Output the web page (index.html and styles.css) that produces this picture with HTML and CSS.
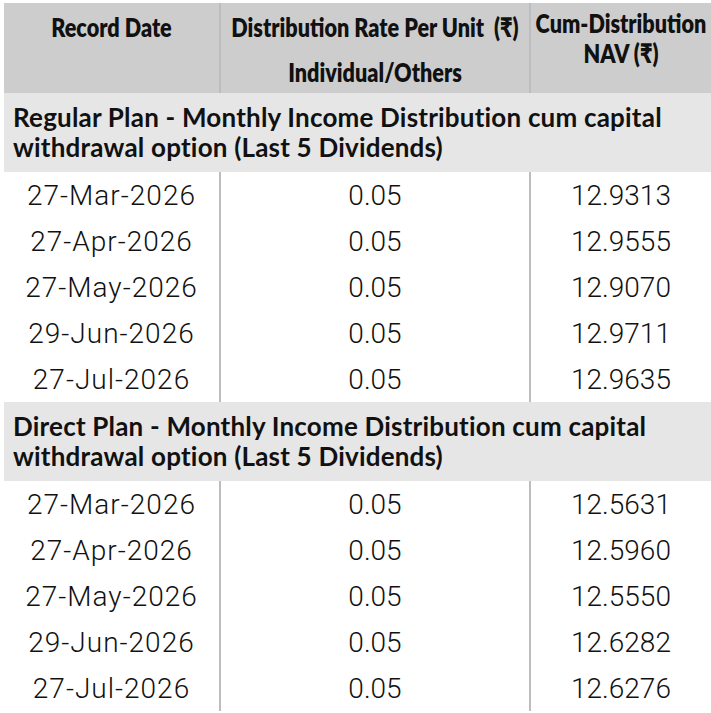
FILE: index.html
```html
<!DOCTYPE html>
<html>
<head>
<meta charset="utf-8">
<link rel="stylesheet" href="styles.css">
</head>
<body>
<table class="dist">
  <colgroup>
    <col class="w1"><col class="w2"><col class="w3">
  </colgroup>
  <thead>
    <tr>
      <th class="h1"><div class="hl"><span>Record Date</span></div></th>
      <th class="h2 sep"><div class="hl"><span>Distribution Rate Per Unit&nbsp; (₹)</span></div><div class="hl sub"><span>Individual/Others</span></div></th>
      <th class="h3 sep"><div class="hl"><span>Cum-Distribution</span></div><div class="hl"><span>NAV (₹)</span></div></th>
    </tr>
  </thead>
  <tbody>
    <tr class="sec"><td colspan="3">Regular Plan - Monthly Income Distribution cum capital withdrawal option (Last 5 Dividends)</td></tr>
    <tr><td class="date">27-Mar-2026</td><td class="sep">0.05</td><td class="sep">12.9313</td></tr>
    <tr><td class="date">27-Apr-2026</td><td class="sep">0.05</td><td class="sep">12.9555</td></tr>
    <tr><td class="date">27-May-2026</td><td class="sep">0.05</td><td class="sep">12.9070</td></tr>
    <tr><td class="date">29-Jun-2026</td><td class="sep">0.05</td><td class="sep">12.9711</td></tr>
    <tr><td class="date">27-Jul-2026</td><td class="sep">0.05</td><td class="sep">12.9635</td></tr>
    <tr class="sec"><td colspan="3">Direct Plan - Monthly Income Distribution cum capital withdrawal option (Last 5 Dividends)</td></tr>
    <tr><td class="date">27-Mar-2026</td><td class="sep">0.05</td><td class="sep">12.5631</td></tr>
    <tr><td class="date">27-Apr-2026</td><td class="sep">0.05</td><td class="sep">12.5960</td></tr>
    <tr><td class="date">27-May-2026</td><td class="sep">0.05</td><td class="sep">12.5550</td></tr>
    <tr><td class="date">29-Jun-2026</td><td class="sep">0.05</td><td class="sep">12.6282</td></tr>
    <tr><td class="date">27-Jul-2026</td><td class="sep">0.05</td><td class="sep">12.6276</td></tr>
  </tbody>
</table>
</body>
</html>
```

FILE: styles.css
```css
html, body {
  margin: 0;
  padding: 0;
  background: #ffffff;
}
body {
  padding: 3px 0 0 4px;
  color: #111111;
  font-family: "Roboto", "DejaVu Sans", sans-serif;
}
.dist {
  border-collapse: collapse;
  table-layout: fixed;
  width: 707px;
}
.w1 { width: 216px; }
.w2 { width: 310px; }
.w3 { width: 181px; }
.dist th {
  background: #cdcdcd;
  font-family: "Lato", "DejaVu Sans", sans-serif;
  font-weight: 800;
  font-size: 27px;
  line-height: 35px;
  vertical-align: top;
  text-align: center;
  padding: 6px 0 0 0;
  height: 84px;
  color: #111111;
}
.dist th.h3 {
  line-height: 30px;
  padding-top: 5px;
  height: 85px;
}
.hl {
  display: flex;
  justify-content: center;
  white-space: nowrap;
  transform: scaleX(0.8);
  transform-origin: 50% 50%;
}
.hl span {
  flex: none;
}
.dist th .sub {
  margin-top: 10px;
}
.sep {
  border-left: 2px solid #bdbdbd;
}
.dist td {
  text-align: center;
  font-size: 28px;
  font-weight: 300;
  height: 46px;
  padding: 0;
  vertical-align: middle;
  color: #111111;
}
.dist td.date {
  letter-spacing: 1px;
}
.dist .sec td {
  background: #e6e6e6;
  font-family: "Lato", "DejaVu Sans", sans-serif;
  font-weight: 700;
  font-size: 26px;
  line-height: 30px;
  letter-spacing: 0.2px;
  text-align: left;
  padding: 9px 9px 10px 9px;
  height: 60px;
  vertical-align: top;
}
```
